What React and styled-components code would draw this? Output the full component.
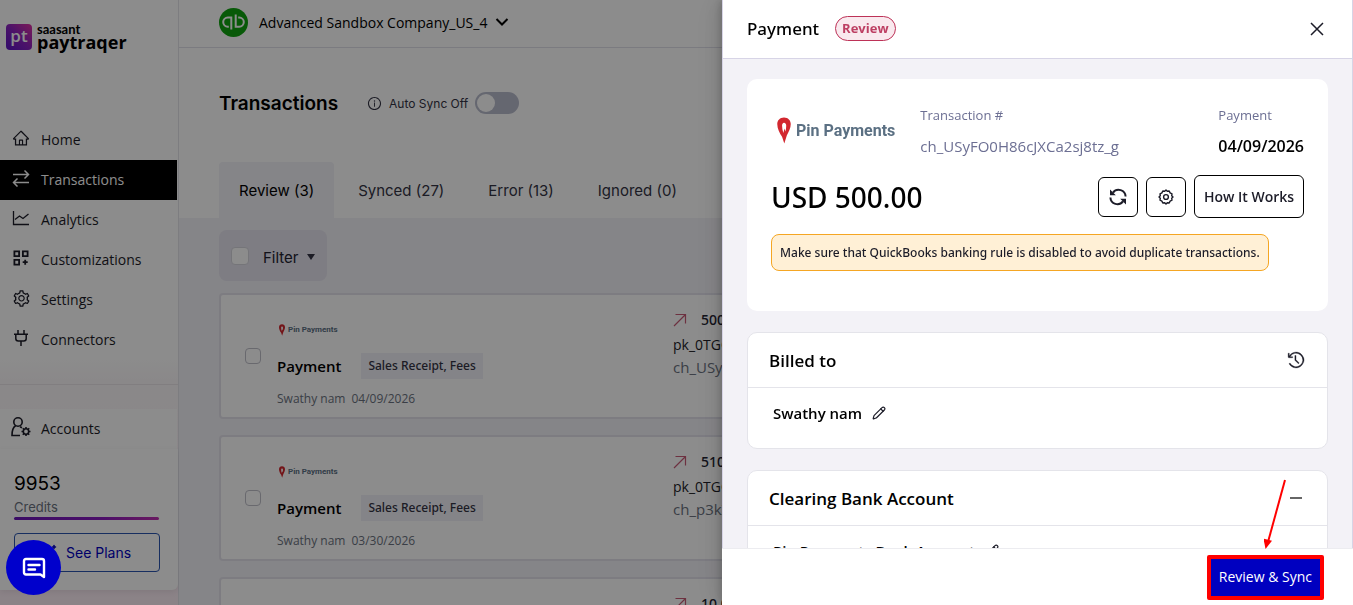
import React, { useState } from 'react';
import styled, { createGlobalStyle } from 'styled-components';
import { Pencil, Sparkles } from 'lucide-react';
import { AiOutlineHome, AiOutlineSetting, AiOutlineInfoCircle } from 'react-icons/ai';
import { VscHistory } from 'react-icons/vsc';

const SANS = "'Open Sans', 'Noto Sans', sans-serif"
const MEDIUM = "'Noto Sans', 'Open Sans', sans-serif"
const HEAD = "Inter, 'Liberation Sans', sans-serif"

const SwapIcon = () => (
    <svg width="18" height="18" viewBox="0 0 18 18" fill="none" stroke="currentColor" strokeWidth="1.5" aria-hidden="true">
        <path d="M1 5.5h15.5M12.5 1.5l4 4-4 4M17 13.5H1.5M5.5 9.5l-4 4 4 4" />
    </svg>
)
const ChartIcon = () => (
    <svg width="18" height="18" viewBox="0 0 18 18" fill="none" stroke="currentColor" strokeWidth="1.3" aria-hidden="true">
        <path d="M1.5 2v13.5H17M3 10.5l4.500-3.500 3.500 2.500 5.500-4.500" />
    </svg>
)
const AppsIcon = () => (
    <svg width="18" height="18" viewBox="0 0 18 18" fill="none" stroke="currentColor" strokeWidth="1.8" aria-hidden="true">
        <path d="M2.4 2.4h4.7v4.7H2.4zM10.9 2.4h4.7v4.7h-4.7zM2.4 10.9h4.7v4.7H2.4zM13.2 10.700v5M10.700 13.2h5" />
    </svg>
)
const PlugIcon = () => (
    <svg width="18" height="18" viewBox="0 0 18 18" fill="none" stroke="currentColor" strokeWidth="1.5" aria-hidden="true">
        <path d="M6 1v4M12 1v4M2 5.2h14M3.8 5.2v4.300q0 2.500 2.500 2.500h5.400q2.500 0 2.500-2.500V5.2M9 12v5" />
    </svg>
)
const AccountIcon = () => (
    <svg width="22" height="22" viewBox="0 0 22 22" fill="none" stroke="currentColor" strokeWidth="1.6" aria-hidden="true">
        <circle cx="8" cy="6" r="4.2" />
        <path d="M5.6 9.8C3 11.4 2 14 2 19.5h8M10 10.8l2 1" />
        <circle cx="16" cy="15.5" r="2.7" />
        <path d="M16 11v2M16 18v2M11.5 15.5h2M18.5 15.5h2M12.8 12.3l1.4 1.4M17.8 17.3l1.4 1.4M19.2 12.3l-1.4 1.4M14.2 17.3l-1.4 1.4" />
    </svg>
)
const Chevron = () => (
    <svg width="14" height="10" viewBox="0 0 14 10" fill="none" stroke="currentColor" strokeWidth="2" aria-hidden="true">
        <path d="M1.5 2L7 7.5 12.5 2" />
    </svg>
)
const OutIcon = () => (
    <svg width="14" height="14" viewBox="0 0 14 14" fill="none" stroke="#c65a76" strokeWidth="1.2" aria-hidden="true">
        <path d="M1 13L12.5 1.5M2.5 1.5h10v9" />
    </svg>
)
const RefreshIcon = () => (
    <svg width="18" height="18" viewBox="0 0 18 18" fill="none" stroke="currentColor" strokeWidth="2" aria-hidden="true">
        <path d="M16.6 8.5A7 7 0 0 0 4 4.6M1.4 9.5A7 7 0 0 0 14 13.4" />
        <path d="M1 1.4v5.8h5.8zM17 16.6v-5.8h-5.8z" fill="currentColor" stroke="none" />
    </svg>
)
const CogIcon = () => (
    <svg width="16" height="16" viewBox="0 0 16 16" fill="none" stroke="currentColor" strokeWidth="1.4" strokeLinejoin="round" aria-hidden="true">
        <path d="M6.7 2.3L8 1l1.3 1.3 1.9-.3.9 1.9 1.9.9-.3 1.9L15 8l-1.3 1.3.3 1.9-1.9.9-.9 1.9-1.9-.3L8 15l-1.3-1.3-1.9.3-.9-1.9-1.9-.9.3-1.9L1 8l1.3-1.3L2 4.8l1.9-.9.9-1.9z" />
        <circle cx="8" cy="8" r="2.4" />
    </svg>
)
const CloseIcon = () => (
    <svg width="14" height="14" viewBox="0 0 14 14" fill="none" stroke="currentColor" strokeWidth="1.5" aria-hidden="true">
        <path d="M1 1l12 12M13 1L1 13" />
    </svg>
)
const ChatIcon = () => (
    <svg width="24" height="22" viewBox="0 0 24 22" fill="none" stroke="#fff" strokeWidth="2.4" strokeLinejoin="round" strokeLinecap="round" aria-hidden="true">
        <path d="M4 2h16q2 0 2 2v16l-3.500-2.500H4q-2 0-2-2V4q0-2 2-2z" />
        <path d="M6.500 8h11M6.500 12.500h6.500" />
    </svg>
)
const QbIcon = () => (
    <svg width="29" height="29" viewBox="0 0 29 29" fill="none" stroke="#fff" strokeWidth="2" aria-hidden="true">
        <circle cx="14.500" cy="14.500" r="14.500" fill="#0fa30f" stroke="none" />
        <path d="M12.300 21.500V9.500H8.800a4.600 4.600 0 0 0 0 9.200h1M16.700 6.500v12.200h3.500a4.600 4.600 0 0 0 0-9.200h-1" />
    </svg>
)
const PinMark = ({ size }) => (
    <svg width={Math.round(size / 2)} height={size} viewBox="0 0 14 28" aria-hidden="true">
        <path fill="#d2272f" fillRule="evenodd" d="M7 0.500c4.200 0 7 3 7 6.800 0 4.200-2 7.700-4 11.700L7.300 27.500 5 20.500C2.500 17 0 12 0 7.300 0 3.500 2.800.5 7 .5zM7 6C5.700 6 5 7.500 5 9c0 2.500.5 5 1.300 7.500L7.500 12l1 3C9 13 9.300 11 9.300 9 9.300 7.500 8.500 6 7 6z" />
    </svg>
)
const PayLogo = () => (
    <svg width="26" height="26" viewBox="0 0 26 26" aria-hidden="true">
        <defs>
            <linearGradient id="pt" x1="0" y1="1" x2="1" y2="0">
                <stop offset="0" stopColor="#5a16c4" />
                <stop offset="0.500" stopColor="#8a22c0" />
                <stop offset="1" stopColor="#e02fa0" />
            </linearGradient>
        </defs>
        <rect width="26" height="26" rx="4" fill="url(#pt)" />
        <text x="13" y="18" textAnchor="middle" fontFamily="Open Sans" fontWeight="600" fontSize="17" fill="#fff">pt</text>
    </svg>
)

const MENU = [
    { label: 'Home', icon: <AiOutlineHome size={18} /> },
    { label: 'Transactions', icon: <SwapIcon />, active: true },
    { label: 'Analytics', icon: <ChartIcon /> },
    { label: 'Customizations', icon: <AppsIcon /> },
    { label: 'Settings', icon: <AiOutlineSetting size={19} /> },
    { label: 'Connectors', icon: <PlugIcon /> },
]
const TABS = ['Review (3)', 'Synced (27)', 'Error (13)', 'Ignored (0)']
const ROWS = [
    { date: '04/09/2026', amount: '500.00', key: 'pk_0TGO', id: 'ch_USyFO0H' },
    { date: '03/30/2026', amount: '510.00', key: 'pk_0TGO', id: 'ch_p3kX' },
    { date: '03/30/2026', amount: '10.00', key: 'pk_0TGO', id: 'ch_p3kX' },
]

const TransactionRow = ({ row }) => (
    <Card>
        <SmallCheck type="checkbox" aria-label={`Select payment ${row.date}`} />
        <Details>
            <Brand $small><PinMark size={12} />Pin Payments</Brand>
            <Kind>Payment<Tag>Sales Receipt, Fees</Tag></Kind>
            <Meta><span>Swathy nam</span><span>{row.date}</span></Meta>
        </Details>
        <Amounts>
            <Amount><OutIcon />{row.amount}</Amount>
            <Key>{row.key}</Key>
            <Reference>{row.id}</Reference>
        </Amounts>
    </Card>
)

const Sidebar = () => (
    <Side>
        <Logo>
            <PayLogo />
            <LogoText><small>saasant</small>paytraqer</LogoText>
        </Logo>
        <nav>
            {MENU.map(item => (
                <MenuItem key={item.label} href="#" $active={item.active}>
                    <MenuIcon>{item.icon}</MenuIcon>{item.label}
                </MenuItem>
            ))}
            <Divider />
            <MenuItem href="#">
                <AccountMark><AccountIcon /></AccountMark>Accounts
            </MenuItem>
        </nav>
        <Credits>
            <CreditCount>9953</CreditCount>
            <CreditLabel>Credits</CreditLabel>
            <CreditBar />
            <PlansButton><Sparkles size={18} />See Plans</PlansButton>
        </Credits>
    </Side>
)

const PaymentDrawer = () => (
    <Drawer role="dialog" aria-label="Payment">
        <DrawerHead>
            <h2>Payment</h2>
            <Badge>Review</Badge>
            <PlainButton aria-label="Close"><CloseIcon /></PlainButton>
        </DrawerHead>
        <DrawerBody>
            <Summary>
                <SummaryTop>
                    <Brand><PinMark size={27} />Pin Payments</Brand>
                    <Field $grow>
                        <Label>Transaction #</Label>
                        <Code>ch_USyFO0H86cJXCa2sj8tz_g</Code>
                    </Field>
                    <Field>
                        <Label>Payment</Label>
                        <DateText>04/09/2026</DateText>
                    </Field>
                </SummaryTop>
                <TotalRow>
                    <Total>USD 500.00</Total>
                    <SquareButton aria-label="Refresh"><RefreshIcon /></SquareButton>
                    <SquareButton aria-label="Settings"><CogIcon /></SquareButton>
                    <HowButton>How It Works</HowButton>
                </TotalRow>
                <Notice>Make sure that QuickBooks banking rule is disabled to avoid duplicate transactions.</Notice>
            </Summary>
            <Panel>
                <PanelHead>
                    <h3>Billed to</h3>
                    <PlainButton aria-label="History"><VscHistory size={18} stroke="currentColor" strokeWidth={0.3} /></PlainButton>
                </PanelHead>
                <PanelBody>Swathy nam<PlainButton aria-label="Edit customer"><Pencil size={14} strokeWidth={2} /></PlainButton></PanelBody>
            </Panel>
            <Panel>
                <PanelHead>
                    <h3>Clearing Bank Account</h3>
                    <PlainButton aria-label="Collapse"><Minus /></PlainButton>
                </PanelHead>
                <PanelBody>Pin Payments Bank Account<PlainButton aria-label="Edit account"><Pencil size={14} strokeWidth={2} /></PlainButton></PanelBody>
            </Panel>
        </DrawerBody>
        <DrawerFoot>
            <Pointer viewBox="0 0 24 72" aria-hidden="true">
                <path d="M21 2L4 64" stroke="#f00" strokeWidth="2" />
                <path d="M-0.500 60.500l8.500 2.300L1.500 71z" fill="#f00" />
            </Pointer>
            <SyncButton>Review &amp; Sync</SyncButton>
        </DrawerFoot>
    </Drawer>
)

export default function App() {
    const [sync, setSync] = useState(false)
    return (
        <Wrap>
            <Global />
            <Sidebar />
            <Main>
                <TopBar>
                    <QbIcon />
                    <CompanyButton>Advanced Sandbox Company_US_4<Chevron /></CompanyButton>
                </TopBar>
                <TitleRow>
                    <h1>Transactions</h1>
                    <AiOutlineInfoCircle size={15} />
                    <label htmlFor="auto-sync">Auto Sync Off</label>
                    <Toggle id="auto-sync" type="checkbox" role="switch" checked={sync} onChange={() => setSync(!sync)} />
                </TitleRow>
                <Tabs role="tablist">
                    {TABS.map((tab, i) => <Tab key={tab} role="tab" aria-selected={i === 0} $active={i === 0}>{tab}</Tab>)}
                </Tabs>
                <List>
                    <FilterBox>
                        <Check type="checkbox" aria-label="Select all" />
                        <FilterButton>Filter<Caret /></FilterButton>
                    </FilterBox>
                    {ROWS.map((row, i) => <TransactionRow key={i} row={row} />)}
                </List>
            </Main>
            <Overlay />
            <PaymentDrawer />
            <ChatButton aria-label="Chat"><ChatIcon /></ChatButton>
        </Wrap>
    )
}

const Global = createGlobalStyle`
    * {
        box-sizing: border-box;
    }
    body {
        margin: 0;
        overflow: hidden;
        font-family: ${SANS};
        font-size: 14px;
        color: #1c1c28;
    }
    h1, h2, h3 {
        margin: 0;
        font-weight: 500;
    }
    button {
        padding: 0;
        font-family: inherit;
        color: inherit;
        background: none;
        border: 0;
        cursor: pointer;
    }
    svg {
        flex: none;
    }
`
const Wrap = styled.div`
    display: flex;
    height: 100vh;
    overflow: hidden;
    background-color: #fff;
`
const Side = styled.aside`
    display: flex;
    flex-direction: column;
    flex: 0 0 179px;
    border-right: 1px solid #e3e3ea;
    background: linear-gradient(#fff 360px, #fcf8fa 380px, #fdeef6);
`
const Logo = styled.div`
    display: flex;
    align-items: flex-start;
    gap: 5px;
    height: 120px;
    padding: 24px 0 0 6px;
`
const LogoText = styled.div`
    font-family: 'Open Sans', sans-serif;
    font-size: 18px;
    font-weight: 700;
    line-height: 17px;
    color: #000;
    small {
        display: block;
        font-family: Lato, sans-serif;
        font-size: 13px;
        font-weight: 700;
        line-height: 10px;
    }
`
const MenuItem = styled.a`
    display: flex;
    align-items: center;
    gap: 11px;
    height: 40px;
    margin-right: 1px;
    padding: 0 0 1px 12px;
    color: ${props => props.$active ? '#fff' : '#1c1c28'};
    background-color: ${props => props.$active ? '#000' : '#fff'};
    text-decoration: none;
`
const MenuIcon = styled.span`
    display: flex;
    justify-content: center;
    width: 18px;
    padding-bottom: 3px;
`
const AccountMark = styled(MenuIcon)`
    svg {
        margin: 0 -2px;
    }
`
const Divider = styled.hr`
    height: 1px;
    margin: 24px 0;
    border: 0;
    background-color: #ebe6ea;
`
const Credits = styled.div`
    display: flex;
    flex-direction: column;
    height: 141px;
    padding: 21px 18px 18px 14px;
    border-radius: 0 0 6px 0;
    background-color: #fff;
    box-shadow: 0 2px 6px rgba(0, 0, 0, 0.08);
    font-family: ${HEAD};
`
const CreditCount = styled.div`
    font-size: 19px;
    line-height: 28px;
    color: #000;
`
const CreditLabel = styled.div`
    font-size: 13px;
    line-height: 18px;
    color: #6b7280;
`
const CreditBar = styled.div`
    flex: none;
    height: 3px;
    margin: 1px 1px 0 0;
    border-radius: 2px;
    background: linear-gradient(90deg, #6a16b8, #8a1cc0 60%, #c02fb0);
`
const PlansButton = styled.button`
    display: flex;
    align-items: center;
    gap: 9px;
    height: 39px;
    margin-top: 13px;
    padding-left: 24px;
    border: 1px solid #2a55b0;
    border-radius: 4px;
    font-family: ${HEAD};
    font-size: 14px;
    color: #0000c0;
    flex: none;
`
const Main = styled.main`
    display: flex;
    flex-direction: column;
    flex: 1;
    min-width: 0;
`
const TopBar = styled.header`
    display: flex;
    align-items: center;
    gap: 11px;
    flex: 0 0 48px;
    padding: 0 40px 3px;
    border-bottom: 1px solid #e0e0ea;
`
const CompanyButton = styled.button`
    display: flex;
    align-items: center;
    gap: 8px;
    font-size: 14px;
    color: #000;
`
const TitleRow = styled.div`
    display: flex;
    align-items: center;
    flex: 0 0 114px;
    padding: 0 40px 4px;
    font-family: ${HEAD};
    font-size: 12px;
    color: #333344;
    h1 {
        margin-right: 29px;
        font-size: 19px;
        font-weight: 600;
        color: #000;
    }
    label {
        margin: 0 7px;
    }
`
const Toggle = styled.input`
    appearance: none;
    width: 44px;
    height: 22px;
    margin: 0;
    padding: 2px;
    border-radius: 11px;
    background-color: #b9bccd;
    &::before {
        content: '';
        display: block;
        width: 18px;
        height: 18px;
        margin-left: ${props => props.checked ? '22px' : '0'};
        border-radius: 50%;
        background-color: #fff;
    }
`
const Tabs = styled.div`
    display: flex;
    gap: 4px;
    flex: 0 0 56px;
    padding: 0 40px;
`
const Tab = styled.button`
    padding: 0 20px;
    border-radius: 4px 4px 0 0;
    background-color: ${props => props.$active ? '#f3f2f7' : 'transparent'};
    font-family: ${HEAD};
    font-size: 15px;
    color: ${props => props.$active ? '#000' : '#333344'};
`
const List = styled.section`
    display: flex;
    flex-direction: column;
    align-items: stretch;
    flex: 1;
    min-height: 0;
    padding: 12px 40px 0;
    overflow: hidden;
    background-color: #f3f2f7;
`
const FilterBox = styled.div`
    display: flex;
    align-items: center;
    gap: 14px;
    flex: 0 0 51px;
    align-self: flex-start;
    padding: 0 12px;
    margin-bottom: 12px;
    border-radius: 8px;
    background-color: #e5e3ee;
`
const Check = styled.input`
    appearance: none;
    width: 18px;
    height: 18px;
    margin: 0;
    border: 1px solid #d5d5dd;
    border-radius: 4px;
    background-color: #fff;
`
const SmallCheck = styled(Check)`
    flex: none;
    width: 16px;
    height: 16px;
    border-color: #bfbfc8;
`
const FilterButton = styled.button`
    display: flex;
    align-items: center;
    gap: 8px;
    padding-top: 3px;
    font-family: ${HEAD};
    font-size: 15px;
    color: #222230;
`
const Caret = styled.span`
    border: 4px solid transparent;
    border-top: 6px solid #333344;
    border-bottom: 0;
`
const Card = styled.article`
    display: flex;
    align-items: center;
    gap: 16px;
    flex: 0 0 126px;
    margin-bottom: 16px;
    padding: 0 24px;
    border: 2px solid #e3e2ec;
    border-radius: 4px;
    background-color: #fff;
    overflow: hidden;
`
const Details = styled.div`
    flex: 0 0 380px;
    padding-top: 18px;
`
const Brand = styled.div`
    display: flex;
    align-items: center;
    gap: ${props => props.$small ? '3px' : '5px'};
    padding-left: ${props => props.$small ? '2px' : '6px'};
    font-family: Roboto, 'Liberation Sans', sans-serif;
    font-size: ${props => props.$small ? '8px' : '16px'};
    font-weight: 700;
    line-height: 16px;
    color: #5b7083;
`
const Kind = styled.div`
    display: flex;
    align-items: center;
    gap: 20px;
    margin: 15px 0 10px;
    font-size: 15px;
    font-weight: 600;
    line-height: 26px;
    color: #000;
`
const Tag = styled.span`
    padding: 0 7px;
    background-color: #f1f1f7;
    font-family: ${MEDIUM};
    font-size: 12px;
    font-weight: 500;
    color: #333344;
`
const Meta = styled.div`
    display: flex;
    gap: 6px;
    font-size: 12px;
    line-height: 20px;
    color: #6b7280;
`
const Amounts = styled.div`
    padding-bottom: 26px;
`
const Amount = styled.div`
    display: flex;
    align-items: center;
    gap: 14px;
    margin-bottom: 2px;
    font-family: ${MEDIUM};
    line-height: 24px;
    font-weight: 500;
    color: #222230;
`
const Key = styled.div`
    line-height: 22px;
`
const Reference = styled.div`
    font-size: 15px;
    line-height: 22px;
    color: #6b7280;
`
const Overlay = styled.div`
    position: fixed;
    inset: 0;
    background-color: rgba(0, 0, 0, 0.45);
`
const Drawer = styled.section`
    position: fixed;
    top: 0;
    right: 0;
    bottom: 0;
    display: flex;
    flex-direction: column;
    width: 631px;
    max-width: 100%;
    background-color: #fff;
    box-shadow: -6px 0 16px rgba(0, 0, 0, 0.08), -3px 0 6px rgba(0, 0, 0, 0.12), -9px 0 28px rgba(0, 0, 0, 0.05);
`
const DrawerHead = styled.header`
    display: flex;
    align-items: center;
    gap: 16px;
    flex: 0 0 59px;
    padding: 0 28px 1px 24px;
    border: 1px solid #d7d4e6;
    border-top: 0;
    h2 {
        font-family: ${MEDIUM};
        font-size: 17px;
        color: #000;
    }
    button {
        margin-left: auto;
    }
`
const Badge = styled.span`
    padding: 0 6px;
    border: 1px solid #bd3257;
    border-radius: 13px;
    background-color: #f9e9ee;
    font-size: 13px;
    font-weight: 700;
    line-height: 23px;
    color: #bd3f63;
`
const PlainButton = styled.button`
    display: flex;
    align-items: center;
    color: #1c1c28;
`
const DrawerBody = styled.div`
    display: flex;
    flex-direction: column;
    gap: 21px;
    flex: 1;
    min-height: 0;
    padding: 20px 24px 0;
    overflow: hidden;
    border: 1px solid #d7d4e6;
    border-width: 0 1px;
    background-color: #f3f2f7;
`
const Summary = styled.div`
    flex: none;
    padding: 24px 24px 40px;
    border-radius: 10px;
    background-color: #fff;
`
const SummaryTop = styled.div`
    display: flex;
    align-items: center;
    gap: 25px;
`
const Field = styled.div`
    flex: ${props => props.$grow ? '1' : 'none'};
`
const Label = styled.div`
    font-size: 13px;
    line-height: 24px;
    color: #6c6f93;
`
const Code = styled.div`
    margin-top: 7px;
    font-size: 15px;
    line-height: 24px;
    color: #6c6f93;
`
const DateText = styled.div`
    margin-top: 7px;
    font-size: 16px;
    line-height: 24px;
    font-weight: 600;
    color: #000;
`
const TotalRow = styled.div`
    display: flex;
    align-items: center;
    gap: 8px;
    margin: 17px 0 16px;
`
const Total = styled.div`
    flex: 1;
    font-family: ${MEDIUM};
    font-size: 28px;
    font-weight: 500;
    line-height: 40px;
    color: #000;
`
const SquareButton = styled.button`
    display: flex;
    align-items: center;
    justify-content: center;
    width: 40px;
    height: 40px;
    border: 1px solid #000;
    border-radius: 6px;
`
const HowButton = styled(SquareButton)`
    width: 110px;
    height: 43px;
    font-size: 14px;
    font-weight: 600;
`
const Notice = styled.div`
    width: fit-content;
    padding: 0 8px;
    border: 1px solid #f5a623;
    border-radius: 8px;
    background-color: #fff0d6;
    font-family: ${MEDIUM};
    font-size: 12px;
    font-weight: 500;
    line-height: 35px;
    color: #1c1c28;
`
const Panel = styled.div`
    flex: none;
    border: 1px solid #e4e4ea;
    border-radius: 10px;
    background-color: #fff;
`
const PanelHead = styled.div`
    display: flex;
    align-items: center;
    justify-content: space-between;
    height: 55px;
    padding: 0 22px 0 21px;
    border-bottom: 1px solid #e4e4ea;
    h3 {
        font-size: 17px;
        font-weight: 600;
        color: #000;
    }
`
const PanelBody = styled.div`
    display: flex;
    align-items: center;
    gap: 10px;
    height: 60px;
    padding: 0 25px 10px;
    font-size: 15px;
    font-weight: 600;
    color: #000;
`
const Minus = styled.span`
    width: 12px;
    height: 2px;
    margin-right: 3px;
    background-color: #666;
`
const DrawerFoot = styled.footer`
    position: relative;
    display: flex;
    justify-content: flex-end;
    align-items: center;
    flex: 0 0 57px;
    padding: 0 29px 0 0;
    border-top: 1px solid #ececf0;
`
const SyncButton = styled.button`
    height: 45px;
    padding: 0 8px 2px;
    border: 4px solid #f00;
    border-radius: 2px;
    background-color: #0000c0;
    font-size: 14px;
    color: #fff;
`
const Pointer = styled.svg`
    position: absolute;
    right: 65px;
    bottom: 55px;
    width: 24px;
    height: 72px;
`
const ChatButton = styled.button`
    position: fixed;
    left: 6px;
    bottom: 10px;
    display: flex;
    align-items: center;
    justify-content: center;
    width: 55px;
    height: 55px;
    border-radius: 50%;
    background-color: #0000cc;
`
